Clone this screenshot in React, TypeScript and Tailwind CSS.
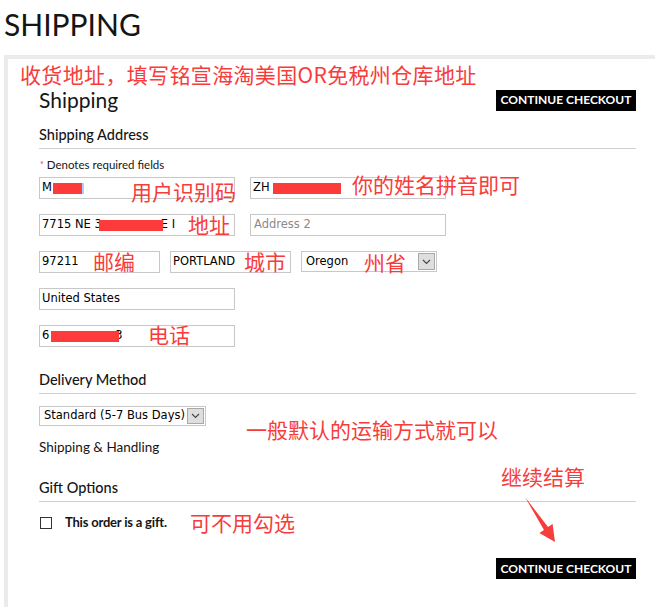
import React from "react";

const Chevron = () => (
  <svg width="9" height="6" viewBox="0 0 9 6" fill="none">
    <path d="M1 1 L4.5 4.5 L8 1" stroke="#444" strokeWidth="1.1" />
  </svg>
);

function TextBox({ w, children }: { w: string; children: React.ReactNode }) {
  return (
    <div
      className={`${w} h-[22px] border border-[#c8c8c8] bg-white flex items-center pl-[2px] text-[11.5px] text-black font-['DejaVu_Sans',sans-serif] whitespace-nowrap overflow-hidden`}
    >
      {children}
    </div>
  );
}

function Select({ w, h, label, size }: { w: string; h: string; label: string; size: string }) {
  return (
    <div
      className={`${w} ${h} border border-[#c8c8c8] bg-white flex items-stretch font-['DejaVu_Sans',sans-serif] ${size} text-black`}
    >
      <div className="flex-1 flex items-center pl-[4px] whitespace-nowrap overflow-hidden">{label}</div>
      <div className="w-[17px] m-[1px] border border-[#a9a9a9] bg-[#dedede] flex items-center justify-center">
        <Chevron />
      </div>
    </div>
  );
}

const Bar = ({ w, cls = "" }: { w: string; cls?: string }) => (
  <span className={`inline-block ${w} h-[11px] bg-[#fd3b3b] ${cls}`} />
);

const Note = ({ x, y, children, extra = "" }: { x: string; y: string; children: React.ReactNode; extra?: string }) => (
  <div
    className={`absolute ${x} ${y} text-[21px] leading-none text-[#f73c3c] font-['Noto_Sans_CJK_SC',sans-serif] whitespace-nowrap ${extra}`}
  >
    {children}
  </div>
);

export default function App() {
  return (
    <div className="relative w-[655px] h-[607px] overflow-hidden bg-white font-['Lato',sans-serif] text-[#151515]">
      <h1 className="h-[55px] pl-[4px] pt-[7px] text-[30px] leading-[34px] font-normal">SHIPPING</h1>
      <div className="ml-[4px] h-[552px] border-l-[4px] border-t-[4px] border-[#ebebed] pl-[31px] pr-[19px] pt-[30px]">
        <div className="flex items-center justify-between h-[22px]">
          <div className="text-[21px] leading-[22px] font-normal">Shipping</div>
          <button className="h-[21px] w-[140px] bg-black text-white text-[12px] font-bold leading-none">
            CONTINUE CHECKOUT
          </button>
        </div>

        <div className="mt-[14px] pb-[3px] border-b border-[#cfcfcf] text-[14.5px] leading-[20px] font-medium">
          Shipping Address
        </div>
        <div className="mt-[9px] text-[11.5px] leading-[14px] pl-[1px]">
          <span className="text-[#e33] text-[9px] align-top">*</span> Denotes required fields
        </div>

        <div className="mt-[5px] flex flex-col gap-[15px]">
          <div className="flex gap-[15px]">
            <TextBox w="w-[196px]">
              M<Bar w="w-[29px]" cls="ml-[1px]" />
              <span className="inline-block w-[2px] h-[11px] bg-[#a6d4f7]" />
            </TextBox>
            <TextBox w="w-[196px]">
              ZH<Bar w="w-[68px]" cls="ml-[3px]" />
            </TextBox>
          </div>
          <div className="flex gap-[15px]">
            <TextBox w="w-[196px]">
              7715 NE 3<Bar w="w-[64px]" cls="-ml-[3px] relative" />
              <span className="-ml-[2px]">E I</span>
            </TextBox>
            <TextBox w="w-[196px]">
              <span className="text-[#8a8a8a] pl-[1px]">Address 2</span>
            </TextBox>
          </div>
          <div className="flex gap-[10px]">
            <TextBox w="w-[121px]">97211</TextBox>
            <TextBox w="w-[121px]">PORTLAND</TextBox>
            <Select w="w-[136px]" h="h-[21px]" label="Oregon" size="text-[11.5px]" />
          </div>
          <div className="flex">
            <TextBox w="w-[196px]">United States</TextBox>
          </div>
          <div className="flex">
            <TextBox w="w-[196px]">
              6<Bar w="w-[68px]" cls="ml-[2px] relative" />
              <span className="-ml-[4px]">3</span>
            </TextBox>
          </div>
        </div>

        <div className="mt-[23px] pb-[3px] border-b border-[#cfcfcf] text-[14.5px] leading-[20px] font-medium">
          Delivery Method
        </div>
        <div className="mt-[12px] flex">
          <Select w="w-[167px]" h="h-[20px]" label="Standard (5-7 Bus Days)" size="text-[11.5px]" />
        </div>
        <div className="mt-[12px] text-[13.5px] leading-[18px]">Shipping &amp; Handling</div>

        <div className="mt-[22px] pb-[3px] border-b border-[#cfcfcf] text-[14.5px] leading-[20px] font-medium">
          Gift Options
        </div>
        <div className="mt-[13px] h-[16px] flex items-center">
          <span className="ml-[1px] w-[12px] h-[12px] border border-[#333] bg-white" />
          <span className="ml-[13px] text-[13px] font-bold tracking-[-0.2px]">This order is a gift.</span>
        </div>

        <div className="mt-[27px] flex justify-end">
          <button className="h-[21px] w-[140px] bg-black text-white text-[12px] font-bold leading-none">
            CONTINUE CHECKOUT
          </button>
        </div>
      </div>

      <Note x="left-[20px]" y="top-[64px]" extra="tracking-[0.35px]">收货地址，填写铭宣海淘美国OR免税州仓库地址</Note>
      <Note x="left-[131px]" y="top-[181px]">用户识别码</Note>
      <Note x="left-[352px]" y="top-[174px]">你的姓名拼音即可</Note>
      <Note x="left-[188px]" y="top-[214px]">地址</Note>
      <Note x="left-[93px]" y="top-[251px]">邮编</Note>
      <Note x="left-[244px]" y="top-[251px]">城市</Note>
      <Note x="left-[364px]" y="top-[252px]">州省</Note>
      <Note x="left-[148px]" y="top-[324px]">电话</Note>
      <Note x="left-[246px]" y="top-[419px]">一般默认的运输方式就可以</Note>
      <Note x="left-[501px]" y="top-[466px]">继续结算</Note>
      <Note x="left-[190px]" y="top-[512px]">可不用勾选</Note>

      <svg className="absolute left-[520px] top-[494px]" width="40" height="52" viewBox="0 0 40 52">
        <polygon points="5,3 28,33 32.6,30 35,48 19.4,39 24,36" fill="#f73c3c" />
      </svg>
    </div>
  );
}
